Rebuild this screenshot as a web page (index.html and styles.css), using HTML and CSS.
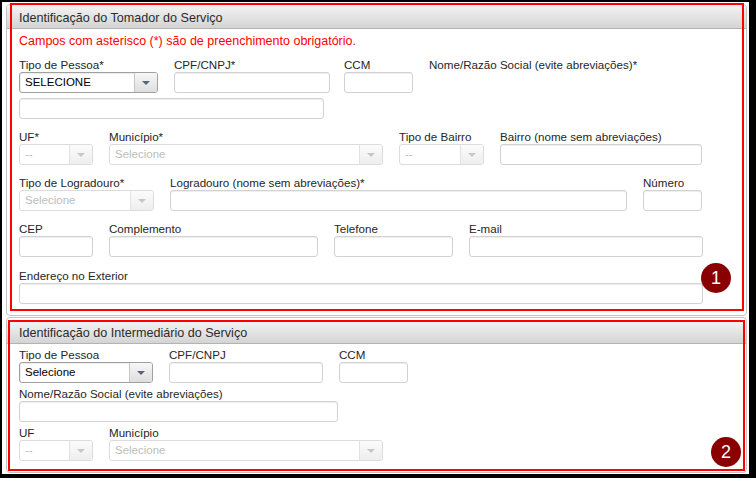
FILE: index.html
```html
<!DOCTYPE html>
<html lang="pt-BR">
<head>
<meta charset="utf-8">
<title>Tomador / Intermediário</title>
<link rel="stylesheet" href="styles.css">
</head>
<body>
<div class="screen">
  <section class="panel">
    <div class="panel-head">Identificação do Tomador do Serviço</div>
    <div class="panel-body">
      <p class="note">Campos com asterisco (*) são de preenchimento obrigatório.</p>
      <div class="row r-first">
        <div class="field w139">
          <span class="label">Tipo de Pessoa*</span>
          <div class="select"><span class="val">SELECIONE</span><span class="arrow"></span></div>
        </div>
        <div class="field w156">
          <span class="label">CPF/CNPJ*</span>
          <input class="input" type="text">
        </div>
        <div class="field w69 ml14">
          <span class="label">CCM</span>
          <input class="input" type="text">
        </div>
        <div class="field">
          <span class="label">Nome/Razão Social (evite abreviações)*</span>
        </div>
      </div>
      <div class="row r-wrap">
        <div class="field w305"><input class="input" type="text"></div>
      </div>
      <div class="row">
        <div class="field w74">
          <span class="label">UF*</span>
          <div class="select disabled"><span class="val">--</span><span class="arrow"></span></div>
        </div>
        <div class="field w274">
          <span class="label">Município*</span>
          <div class="select disabled"><span class="val">Selecione</span><span class="arrow"></span></div>
        </div>
        <div class="field w85">
          <span class="label">Tipo de Bairro</span>
          <div class="select disabled"><span class="val">--</span><span class="arrow"></span></div>
        </div>
        <div class="field w202">
          <span class="label">Bairro (nome sem abreviações)</span>
          <input class="input" type="text">
        </div>
      </div>
      <div class="row">
        <div class="field w135">
          <span class="label">Tipo de Logradouro*</span>
          <div class="select disabled"><span class="val">Selecione</span><span class="arrow"></span></div>
        </div>
        <div class="field w457">
          <span class="label">Logradouro (nome sem abreviações)*</span>
          <input class="input" type="text">
        </div>
        <div class="field w59">
          <span class="label">Número</span>
          <input class="input" type="text">
        </div>
      </div>
      <div class="row">
        <div class="field w74">
          <span class="label">CEP</span>
          <input class="input" type="text">
        </div>
        <div class="field w209">
          <span class="label">Complemento</span>
          <input class="input" type="text">
        </div>
        <div class="field w119">
          <span class="label">Telefone</span>
          <input class="input" type="text">
        </div>
        <div class="field w234">
          <span class="label">E-mail</span>
          <input class="input" type="text">
        </div>
      </div>
      <div class="row r-last">
        <div class="field w684">
          <span class="label">Endereço no Exterior</span>
          <input class="input" type="text">
        </div>
      </div>
    </div>
  </section>

  <section class="panel panel-inter">
    <div class="panel-head">Identificação do Intermediário do Serviço</div>
    <div class="panel-body">
      <div class="row">
        <div class="field w134">
          <span class="label">Tipo de Pessoa</span>
          <div class="select"><span class="val">Selecione</span><span class="arrow"></span></div>
        </div>
        <div class="field w154">
          <span class="label">CPF/CNPJ</span>
          <input class="input" type="text">
        </div>
        <div class="field w69">
          <span class="label">CCM</span>
          <input class="input" type="text">
        </div>
      </div>
      <div class="row">
        <div class="field w319">
          <span class="label">Nome/Razão Social (evite abreviações)</span>
          <input class="input" type="text">
        </div>
      </div>
      <div class="row">
        <div class="field w74">
          <span class="label">UF</span>
          <div class="select disabled"><span class="val">--</span><span class="arrow"></span></div>
        </div>
        <div class="field w274">
          <span class="label">Município</span>
          <div class="select disabled"><span class="val">Selecione</span><span class="arrow"></span></div>
        </div>
      </div>
    </div>
  </section>

  <div class="mark mark-1"></div>
  <div class="mark mark-2"></div>
  <div class="badge badge-1">1</div>
  <div class="badge badge-2">2</div>
</div>
</body>
</html>
```

FILE: styles.css
```css
* { box-sizing: border-box; }

html, body { margin: 0; padding: 0; }

body {
  width: 756px;
  height: 478px;
  overflow: hidden;
  background: #000;
  font-family: "Liberation Sans", Arial, sans-serif;
}

.screen {
  position: relative;
  margin: 2px 7px 0 2px;
  height: 472px;
  padding: 2px 0 0 4px;
  background: #fff;
}

.panel {
  width: 741px;
  border: 1px solid #c4c4c4;
  border-radius: 4px;
  background: #fff;
}

.panel + .panel { margin-top: 1px; }

.panel-head {
  height: 24px;
  padding: 3px 12px 0;
  border-bottom: 1px solid #b3b3b3;
  border-radius: 3px 3px 0 0;
  background: linear-gradient(#f4f4f4, #d4d4d4);
  color: #2b2b2b;
  font-size: 12.6px;
  line-height: 20px;
}

.panel-inter .panel-head {
  height: 23px;
  margin-top: 3px;
  line-height: 19px;
  border-radius: 0;
}

.panel-body { padding: 0 0 11px 12px; }

.note {
  margin: 5px 0 0;
  color: #f00;
  font-size: 12.5px;
  line-height: 14px;
}

.row {
  display: flex;
  align-items: flex-start;
  margin-top: 11px;
}

.row.r-first { margin-top: 10px; }
.row.r-wrap { margin-top: 5px; }
.row.r-last { margin-top: 12px; }

.panel-inter .row { margin-top: 4px; }

.field {
  display: flex;
  flex-direction: column;
  flex: none;
}

.field + .field { margin-left: 16px; }
.field.ml14 { margin-left: 14px; }

.label {
  display: block;
  height: 13px;
  margin-bottom: 1px;
  color: #262626;
  font-size: 11.6px;
  line-height: 13px;
  white-space: nowrap;
}

.input {
  display: block;
  width: 100%;
  height: 21px;
  margin: 0;
  padding: 0 4px;
  border: 1px solid #d2d2d2;
  border-radius: 3px;
  background: #fff;
  box-shadow: inset 0 1px 1px rgba(0, 0, 0, 0.07);
  font: inherit;
  outline: none;
}

.select {
  display: flex;
  height: 21px;
  border: 1px solid #a0a0a0;
  border-radius: 3px;
  background: #fff;
  overflow: hidden;
}

.select .val {
  flex: 1;
  padding-left: 5px;
  color: #000;
  font-size: 11.5px;
  line-height: 19px;
  white-space: nowrap;
  box-shadow: inset 1px 1px 1px rgba(0, 0, 0, 0.08);
}

.select .arrow {
  position: relative;
  flex: none;
  width: 23px;
  border-left: 1px solid #c6c6c6;
  background: linear-gradient(#f7f7f7, #dedede);
}

.select .arrow::after {
  content: "";
  position: absolute;
  left: 7px;
  top: 8px;
  border-left: 4px solid transparent;
  border-right: 4px solid transparent;
  border-top: 4px solid #566577;
}

.select.disabled { border-color: #dcdcdc; }
.select.disabled .val { color: #bdbdbd; box-shadow: none; }
.select.disabled .arrow { border-left-color: #e2e2e2; background: linear-gradient(#fbfbfb, #eeeeee); }
.select.disabled .arrow::after { border-top-color: #c4c8cc; }

.w59 { width: 59px; }
.w69 { width: 69px; }
.w74 { width: 74px; }
.w85 { width: 85px; }
.w119 { width: 119px; }
.w134 { width: 134px; }
.w135 { width: 135px; }
.w139 { width: 139px; }
.w154 { width: 154px; }
.w156 { width: 156px; }
.w202 { width: 202px; }
.w209 { width: 209px; }
.w234 { width: 234px; }
.w274 { width: 274px; }
.w305 { width: 305px; }
.w319 { width: 319px; }
.w457 { width: 457px; }
.w684 { width: 684px; }

/* annotation overlays */
.mark {
  position: absolute;
  border: 2px solid #f00;
  pointer-events: none;
}

.mark-1 { left: 8px; top: 1px; width: 734px; height: 308px; }
.mark-2 { left: 6px; top: 318px; width: 737px; height: 151px; }

.badge {
  position: absolute;
  width: 30px;
  height: 30px;
  border-radius: 50%;
  background: #8a0000;
  color: #fff;
  font-size: 18px;
  line-height: 30px;
  text-align: center;
}

.badge-1 { left: 699px; top: 261px; }
.badge-2 { left: 709px; top: 435px; }
```
